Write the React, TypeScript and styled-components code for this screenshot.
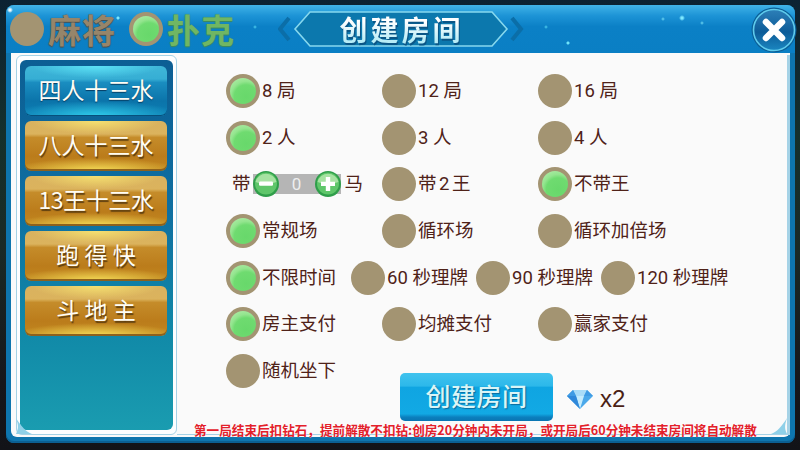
import React from 'react'
import styled, { createGlobalStyle, css } from 'styled-components'

const CJK = `"Noto Sans CJK SC", "Noto Sans", sans-serif`
const LABEL = `Roboto, "Noto Sans CJK SC", sans-serif`

const GlobalStyle = createGlobalStyle`
  html, body {
    margin: 0;
    padding: 0;
    width: 800px;
    height: 450px;
    overflow: hidden;
    background: #10171f;
  }
  * {
    box-sizing: border-box;
  }
`

const Page = styled.div`
  width: 800px;
  height: 450px;
  padding: 5px 5px 7px 6px;
  background: linear-gradient(180deg, #0c2233 0%, #15302c 30%, #1a2a26 55%, #16161b 85%, #121318 100%);
  font-family: ${CJK};
`

const Panel = styled.div`
  position: relative;
  width: 789px;
  height: 438px;
  display: flex;
  flex-direction: column;
  border-radius: 8px;
  background: #0e75ae;
  box-shadow: inset 0 -2px 0 #0b5f92;
`

const Header = styled.div`
  height: 48px;
  flex: none;
  display: flex;
  align-items: center;
  padding-left: 4px;
  border-radius: 8px 8px 0 0;
  background:
    radial-gradient(circle at 112px 13px, #7fe9ff 0, #7fe9ff 1px, transparent 2px),
    radial-gradient(circle at 249px 22px, #4fd0f0 0, transparent 2px),
    radial-gradient(circle at 540px 22px, #4fd0f0 0, transparent 2px),
    radial-gradient(circle at 562px 38px, #6fe4fa 0, #6fe4fa 1px, transparent 2px),
    radial-gradient(circle at 657px 14px, #6fd8f2 0, transparent 2px),
    radial-gradient(circle at 676px 13px, #7fe9ff 0, #7fe9ff 1px, transparent 3px),
    radial-gradient(circle at 696px 18px, #6fd8f2 0, transparent 2px),
    radial-gradient(circle at 4px 5px, #e8f8ff 0, #e8f8ff 1px, transparent 3px),
    linear-gradient(180deg, #41b3e8 0%, #1d94d6 22%, #0b80c6 45%, #0a7fc4 100%);
`

const TabGroup = styled.div`
  display: flex;
  align-items: center;
  gap: 4px;
  width: 119px;
`

const TabLabel = styled.span<{ $on?: boolean }>`
  font-size: 33px;
  line-height: 40px;
  font-weight: 700;
  letter-spacing: 1px;
  white-space: nowrap;
  color: ${({ $on }) => ($on ? '#70b663' : '#96856a')};
  text-shadow: 0 1px 1px ${({ $on }) => ($on ? '#3f8a58' : '#4f4a44')}, 0 0 1px ${({ $on }) => ($on ? '#3f8a58' : '#4f4a44')};
`

const Title = styled.div`
  position: relative;
  width: 248px;
  height: 38px;
  margin-left: 30px;
  padding-right: 4px;
  display: flex;
  align-items: center;
  justify-content: center;
`

const TitlePlate = styled.svg`
  position: absolute;
  inset: 0;
`

const TitleText = styled.span`
  position: relative;
  font-size: 28px;
  line-height: 36px;
  font-weight: 700;
  letter-spacing: 3px;
  margin-left: 3px;
  background: linear-gradient(180deg, #ffffff 30%, #b6ecf6 85%);
  -webkit-background-clip: text;
  background-clip: text;
  color: transparent;
  filter: drop-shadow(1px 2px 0 #0b5686);
`

const CloseButton = styled.svg`
  position: absolute;
  top: 2px;
  right: -2px;
`

const Body = styled.div`
  flex: 1;
  min-height: 0;
  display: flex;
  margin: 0 5px 6px;
  padding: 2px 0 2px 5px;
  border-radius: 0 0 6px 6px;
  background: #fafafa;
`

const Sidebar = styled.div`
  width: 161px;
  flex: none;
  padding: 4px 3px;
  border: 1px solid #a5d2e6;
  border-radius: 6px;
  background: #fdfeff;
`

const SideInner = styled.div`
  height: 100%;
  display: flex;
  flex-direction: column;
  gap: 5px;
  padding: 6px 6px 0 5px;
  border-radius: 6px;
  background: linear-gradient(180deg, #0c5e94 0%, #0e6fa1 40%, #118aa8 75%, #1a9cb0 100%);
`

const SideButton = styled.div<{ $active?: boolean; $tight?: boolean }>`
  height: 50px;
  flex: none;
  display: flex;
  align-items: center;
  justify-content: center;
  padding-bottom: 4px;
  border-radius: 6px;
  font-size: 23px;
  line-height: 30px;
  font-weight: 400;
  white-space: nowrap;
  letter-spacing: ${({ $tight }) => ($tight ? '-0.4px' : '0')};
  color: #fffdf5;
  ${({ $active }) =>
    $active
      ? css`
          background:
            radial-gradient(ellipse 60% 30% at 50% 100%, #2fcbea 0%, transparent 100%),
            radial-gradient(ellipse 45% 24% at 50% 0%, #5ce2f6 0%, transparent 100%),
            linear-gradient(180deg, #3fb6d8 0%, #36aed4 26%, #1a8dc0 33%, #0b74aa 70%, #0d7fb4 100%);
          box-shadow: inset 0 -1px 0 #07507c;
          text-shadow: 0 1px 1px #063d63;
        `
      : css`
          background:
            radial-gradient(ellipse 60% 26% at 50% 100%, #f6de58 0%, transparent 100%),
            radial-gradient(ellipse 45% 26% at 50% 0%, #f5e070 0%, transparent 100%),
            linear-gradient(180deg, #d9b25f 0%, #dbb35d 26%, #c58c2a 33%, #bb7c1b 70%, #c28820 100%);
          box-shadow: inset 0 -2px 0 #8d611d;
          text-shadow: 1px 2px 1px #5f3f10;
        `}
`

const Options = styled.div`
  flex: 1;
  min-width: 0;
  display: flex;
  flex-direction: column;
  padding-top: 13px;
  border-right: 3px solid #a5d2e6;
  border-bottom: 1px solid #a5d2e6;
`

const Row = styled.div<{ $col?: number }>`
  height: 46.6px;
  flex: none;
  display: grid;
  grid-template-columns: repeat(4, ${({ $col }) => $col ?? 156}px);
  align-items: center;
  padding-left: 49px;
`

const Option = styled.div`
  display: flex;
  align-items: center;
  gap: 2px;
`

const Radio = styled.span<{ $on?: boolean }>`
  position: relative;
  width: 34px;
  height: 34px;
  flex: none;
  border-radius: 50%;
  background: #a39472;
  ${({ $on }) =>
    $on &&
    css`
      &::after {
        content: '';
        position: absolute;
        inset: 4px;
        border-radius: 50%;
        background: radial-gradient(circle at 62% 72%, #68d86b 0%, #6fdb70 48%, #93e58e 62%, #bdeeb3 100%);
      }
    `}
`

const Label = styled.span<{ $tight?: boolean }>`
  font-family: ${LABEL};
  font-size: 18.5px;
  line-height: 26px;
  white-space: nowrap;
  word-spacing: ${({ $tight }) => ($tight ? '-2px' : '0')};
  color: #4f2218;
`

const Stepper = styled.div`
  display: flex;
  align-items: center;
  padding-left: 6px;
`

const StepTrack = styled.div`
  width: 88px;
  height: 26px;
  margin: 0 4px 0 2px;
  display: flex;
  align-items: center;
  justify-content: space-between;
  background: linear-gradient(180deg, transparent 3px, #b5b5b5 3px, #b5b5b5 23px, transparent 23px);
`

const StepButton = styled.svg`
  flex: none;
`

const StepValue = styled.span`
  font-family: ${LABEL};
  font-size: 17px;
  color: #eeeeee;
`

const LastRow = styled.div`
  display: flex;
  align-items: flex-start;
  padding-left: 49px;
  height: 73px;
  flex: none;
`

const LastOption = styled(Option)`
  width: 174px;
  height: 46.6px;
`

const CreateButton = styled.div`
  width: 153px;
  height: 48px;
  margin-top: 25px;
  display: flex;
  align-items: center;
  justify-content: center;
  padding-bottom: 3px;
  border-radius: 5px;
  background: linear-gradient(180deg, #41c3ee 0%, #2cb8ea 27%, #0fa5e2 30%, #12a9e4 85%, #0b7fbe 92%, #0a75b2 100%);
  font-size: 25px;
  line-height: 32px;
  font-weight: 500;
  letter-spacing: 0.5px;
  color: #d9f5f7;
  text-shadow: 1px 1px 1px #0a6c9e;
`

const Cost = styled.div`
  display: flex;
  align-items: center;
  gap: 7px;
  margin: 37px 0 0 14px;
`

const CostText = styled.span`
  font-family: "Liberation Sans", Arial, sans-serif;
  font-size: 24px;
  line-height: 28px;
  color: #4a1f15;
`

const Notice = styled.div`
  margin: 2px 0 0 17px;
  font-family: ${CJK};
  font-size: 12.6px;
  line-height: 14px;
  font-weight: 700;
  white-space: nowrap;
  color: #e3202a;
  text-shadow: 0 0 1px #ffffff;
`

const Corner = styled.svg<{ $right?: boolean }>`
  position: absolute;
  bottom: 9px;
  ${({ $right }) => ($right ? 'right: 8px; transform: scaleX(-1);' : 'left: 10px;')}
`

function MinusIcon() {
  return (
    <StepButton width="26" height="26" viewBox="0 0 26 26">
      <circle cx="13" cy="13" r="13" fill="#2f9e4a" />
      <circle cx="13" cy="12.5" r="11" fill="#5fc66a" />
      <path d="M2.5 11a10.8 10.8 0 0 1 21 0c-6 2-15 2-21 0z" fill="#a6e2a2" />
      <rect x="6" y="10.6" width="14" height="4.2" rx="1.2" fill="#fff" />
    </StepButton>
  )
}

function PlusIcon() {
  return (
    <StepButton width="26" height="26" viewBox="0 0 26 26">
      <circle cx="13" cy="13" r="13" fill="#2f9e4a" />
      <circle cx="13" cy="12.5" r="11" fill="#5fc66a" />
      <path d="M2.5 11a10.8 10.8 0 0 1 21 0c-6 2-15 2-21 0z" fill="#a6e2a2" />
      <path d="M6 10.8h4.8V6h4.4v4.8H20v4.2h-4.8v5h-4.4v-5H6z" fill="#fff" />
    </StepButton>
  )
}

function Diamond() {
  return (
    <svg width="26" height="20" viewBox="0 0 26 20">
      <path d="M6 1h14l6 6-13 13L0 7z" fill="#4aa8ea" />
      <path d="M6 1h14l-3 6H9z" fill="#a9dcf8" />
      <path d="M9 7h8l-4 13z" fill="#c4ebfd" />
      <path d="M0 7l6-6 3 6z" fill="#3f9be4" />
      <path d="M26 7l-6-6-3 6z" fill="#3f9be4" />
      <path d="M0 7h9l4 13z" fill="#2f88da" />
    </svg>
  )
}

function Opt({ on, text, tight }: { on?: boolean; text: string; tight?: boolean }) {
  return (
    <Option>
      <Radio $on={on} />
      <Label $tight={tight}>{text}</Label>
    </Option>
  )
}

export default function App() {
  return (
    <Page>
      <GlobalStyle />
      <Panel>
        <Header>
          <TabGroup>
            <Radio />
            <TabLabel>麻将</TabLabel>
          </TabGroup>
          <TabGroup>
            <Radio $on />
            <TabLabel $on>扑克</TabLabel>
          </TabGroup>
          <Title>
            <TitlePlate width="248" height="38" viewBox="0 0 248 38">
              <path d="M17 19L32 2H214L229 19L214 36H32z" fill="#0c78ad" stroke="#86d8ee" strokeWidth="1.6" />
              <path d="M11 8L2 19L11 30" fill="none" stroke="#0b6ea8" strokeWidth="4" />
              <path d="M234 8L243 19L234 30" fill="none" stroke="#0b6ea8" strokeWidth="4" />
            </TitlePlate>
            <TitleText>创建房间</TitleText>
          </Title>
          <CloseButton width="46" height="46" viewBox="0 0 46 46">
            <defs>
              <linearGradient id="closeFill" x1="0" y1="0" x2="0" y2="1">
                <stop offset="0" stopColor="#2d7fb8" />
                <stop offset="0.55" stopColor="#0d5c98" />
                <stop offset="1" stopColor="#1a86c0" />
              </linearGradient>
            </defs>
            <circle cx="23" cy="23" r="22.5" fill="#0b5e96" />
            <circle cx="23" cy="23" r="20.5" fill="url(#closeFill)" stroke="#5fcbec" strokeWidth="1.6" />
            <path d="M15 15L31 31M31 15L15 31" stroke="#fff" strokeWidth="6.5" strokeLinecap="round" />
          </CloseButton>
        </Header>
        <Body>
          <Sidebar>
            <SideInner>
              <SideButton $active>四人十三水</SideButton>
              <SideButton>八人十三水</SideButton>
              <SideButton $tight>13王十三水</SideButton>
              <SideButton>跑 得 快</SideButton>
              <SideButton>斗 地 主</SideButton>
            </SideInner>
          </Sidebar>
          <Options>
            <Row>
              <Opt on text="8 局" />
              <Opt text="12 局" />
              <Opt text="16 局" />
            </Row>
            <Row>
              <Opt on text="2 人" />
              <Opt text="3 人" />
              <Opt text="4 人" />
            </Row>
            <Row>
              <Stepper>
                <Label>带</Label>
                <StepTrack>
                  <MinusIcon />
                  <StepValue>0</StepValue>
                  <PlusIcon />
                </StepTrack>
                <Label>马</Label>
              </Stepper>
              <Opt tight text="带 2 王" />
              <Opt on text="不带王" />
            </Row>
            <Row>
              <Opt on text="常规场" />
              <Opt text="循环场" />
              <Opt text="循环加倍场" />
            </Row>
            <Row $col={125}>
              <Opt on text="不限时间" />
              <Opt text="60 秒理牌" />
              <Opt text="90 秒理牌" />
              <Opt text="120 秒理牌" />
            </Row>
            <Row>
              <Opt on text="房主支付" />
              <Opt text="均摊支付" />
              <Opt text="赢家支付" />
            </Row>
            <LastRow>
              <LastOption>
                <Radio />
                <Label>随机坐下</Label>
              </LastOption>
              <CreateButton>创建房间</CreateButton>
              <Cost>
                <Diamond />
                <CostText>x2</CostText>
              </Cost>
            </LastRow>
            <Notice>第一局结束后扣钻石，提前解散不扣钻:创房20分钟内未开局，或开局后60分钟未结束房间将自动解散</Notice>
          </Options>
        </Body>
        <Corner width="16" height="16" viewBox="0 0 16 16">
          <path d="M0 0C2 6 3 10 0 16H16C10 14 5 8 0 0z" fill="#8fd0e8" />
        </Corner>
        <Corner $right width="16" height="16" viewBox="0 0 16 16">
          <path d="M0 0C2 6 3 10 0 16H16C10 14 5 8 0 0z" fill="#8fd0e8" />
        </Corner>
      </Panel>
    </Page>
  )
}
